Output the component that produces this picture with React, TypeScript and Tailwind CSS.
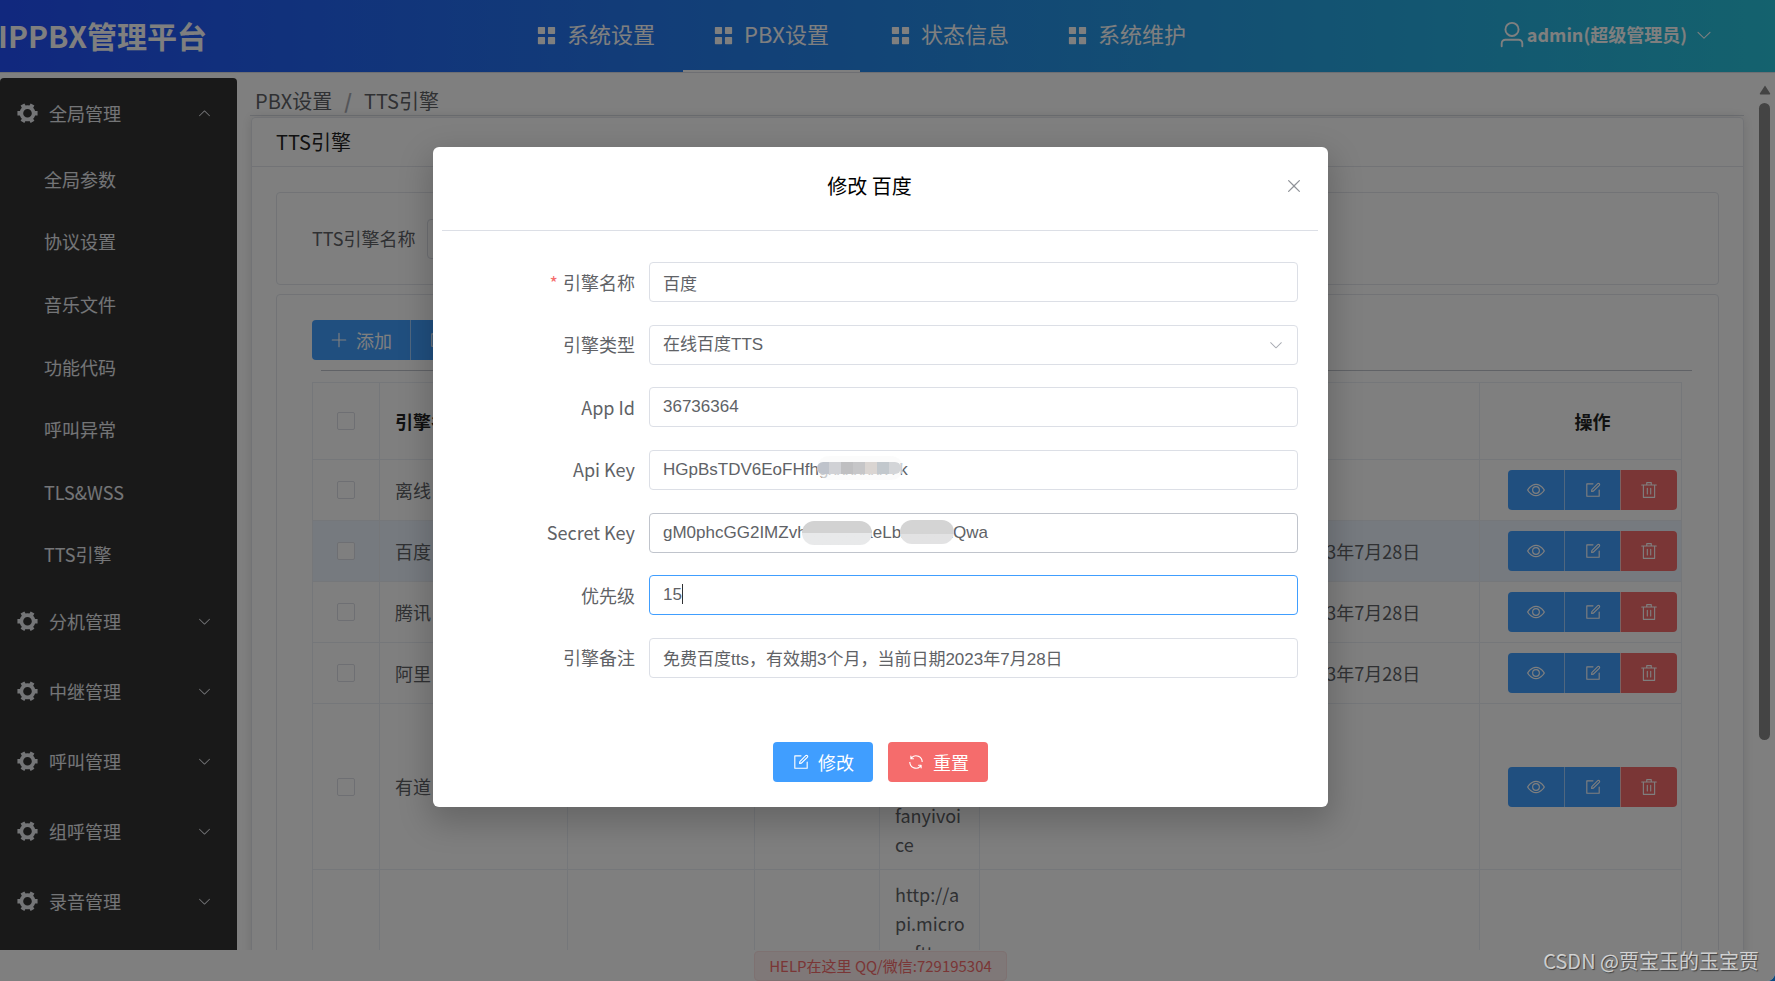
import React from 'react';
import { clsx } from 'clsx';

const ICONS = {
  menu: 'M160 448a32 32 0 0 1-32-32V160.064a32 32 0 0 1 32-32h256a32 32 0 0 1 32 32V416a32 32 0 0 1-32 32H160zm448 0a32 32 0 0 1-32-32V160.064a32 32 0 0 1 32-32h255.936a32 32 0 0 1 32 32V416a32 32 0 0 1-32 32H608zM160 896a32 32 0 0 1-32-32V608a32 32 0 0 1 32-32h256a32 32 0 0 1 32 32v256a32 32 0 0 1-32 32H160zm448 0a32 32 0 0 1-32-32V608a32 32 0 0 1 32-32h255.936a32 32 0 0 1 32 32v256a32 32 0 0 1-32 32H608z',
  gear: 'M764.416 254.72a351.68 351.68 0 0 1 86.336 149.184H960v192.064H850.752a351.68 351.68 0 0 1-86.336 149.312l54.72 94.72-166.272 96-54.592-94.72a352.64 352.64 0 0 1-172.48 0L371.136 936l-166.272-96 54.72-94.72a351.68 351.68 0 0 1-86.336-149.312H64v-192h109.248a351.68 351.68 0 0 1 86.336-149.312L204.8 160l166.208-96h.192l54.656 94.592a352.64 352.64 0 0 1 172.48 0L652.8 64h.128L819.2 160l-54.72 94.72zM704 499.968a192 192 0 1 0-384 0 192 192 0 0 0 384 0z',
  arrow: 'M831.872 340.864 512 652.672 192.128 340.864a30.592 30.592 0 0 0-42.752 0 29.12 29.12 0 0 0 0 41.6L489.664 714.24a32 32 0 0 0 44.672 0l340.288-331.712a29.12 29.12 0 0 0 0-41.728 30.592 30.592 0 0 0-42.752 0z',
  user: 'M512 512a192 192 0 1 0 0-384 192 192 0 0 0 0 384zm0 64a256 256 0 1 1 0-512 256 256 0 0 1 0 512zm320 320v-96a96 96 0 0 0-96-96H288a96 96 0 0 0-96 96v96a32 32 0 1 1-64 0v-96a160 160 0 0 1 160-160h448a160 160 0 0 1 160 160v96a32 32 0 1 1-64 0z',
  plus: 'M480 480V128a32 32 0 0 1 64 0v352h352a32 32 0 1 1 0 64H544v352a32 32 0 1 1-64 0V544H128a32 32 0 0 1 0-64h352z',
  close: 'M764.288 214.592 512 466.88 259.712 214.592a31.936 31.936 0 0 0-45.12 45.12L466.752 512 214.528 764.224a31.936 31.936 0 1 0 45.12 45.184L512 557.184l252.288 252.288a31.936 31.936 0 0 0 45.12-45.12L557.12 512.064l252.288-252.352a31.936 31.936 0 1 0-45.12-45.184z',
  view: 'M512 160c320 0 512 352 512 352S832 864 512 864 0 512 0 512s192-352 512-352zm0 64c-225.28 0-384.128 208.064-436.8 288 52.608 79.872 211.456 288 436.8 288 225.28 0 384.128-208.064 436.8-288-52.608-79.872-211.456-288-436.8-288zm0 64a224 224 0 1 1 0 448 224 224 0 0 1 0-448zm0 64a160.192 160.192 0 0 0-160 160c0 88.192 71.744 160 160 160s160-71.808 160-160-71.744-160-160-160z',
  edit: 'M832 512a32 32 0 1 1 64 0v352a32 32 0 0 1-32 32H160a32 32 0 0 1-32-32V160a32 32 0 0 1 32-32h352a32 32 0 0 1 0 64H192v640h640V512zM469.952 554.24l52.8-7.552L847.104 222.4a32 32 0 1 0-45.248-45.248L477.44 501.44l-7.552 52.8zm422.4-422.4a96 96 0 0 1 0 135.808l-331.84 331.84a32 32 0 0 1-18.112 9.088L436.8 623.68a32 32 0 0 1-36.224-36.224l15.104-105.6a32 32 0 0 1 9.024-18.112l331.904-331.84a96 96 0 0 1 135.744 0z',
  trash: 'M160 256H96a32 32 0 0 1 0-64h256V95.936a32 32 0 0 1 32-32h256a32 32 0 0 1 32 32V192h256a32 32 0 1 1 0 64h-64v672a32 32 0 0 1-32 32H192a32 32 0 0 1-32-32V256zm448-64v-64H416v64h192zM224 896h576V256H224v640zm192-128a32 32 0 0 1-32-32V416a32 32 0 0 1 64 0v320a32 32 0 0 1-32 32zm192 0a32 32 0 0 1-32-32V416a32 32 0 0 1 64 0v320a32 32 0 0 1-32 32z',
  refresh: 'M771.776 794.88A384 384 0 0 1 128 512h64a320 320 0 0 0 555.712 216.448H654.72a32 32 0 1 1 0-64h149.056a32 32 0 0 1 32 32v148.928a32 32 0 1 1-64 0v-50.56zM276.288 295.616h92.992a32 32 0 0 1 0 64H220.16a32 32 0 0 1-32-32V178.56a32 32 0 0 1 64 0v50.56A384 384 0 0 1 896.128 512h-64a320 320 0 0 0-555.776-216.384z',
};

function Icon({ name, className }: { name: keyof typeof ICONS; className?: string }) {
  return (
    <svg viewBox="0 0 1024 1024" fill="currentColor" aria-hidden="true" className={clsx('shrink-0', className)}>
      <path d={ICONS[name]} />
    </svg>
  );
}

const navItems = ['系统设置', 'PBX设置', '状态信息', '系统维护'];
const subMenus = ['全局参数', '协议设置', '音乐文件', '功能代码', '呼叫异常', 'TLS&WSS', 'TTS引擎'];
const menus = ['分机管理', '中继管理', '呼叫管理', '组呼管理', '录音管理'];

const engines = [
  { name: '离线', type: '离线TTS', level: '10', url: '', remark: '' },
  { name: '百度', type: '在线百度TTS', level: '15', url: '', remark: '免费百度tts，有效期3个月，当前日期2023年7月28日' },
  { name: '腾讯', type: '在线腾讯TTS', level: '20', url: '', remark: '免费腾讯tts，有效期3个月，当前日期2023年7月28日' },
  { name: '阿里', type: '在线阿里TTS', level: '25', url: '', remark: '免费阿里tts，有效期3个月，当前日期2023年7月28日' },
  { name: '有道', type: '在线有道TTS', level: '30', url: 'http://tt\ns.youda\no.com/\nfanyivoi\nce', remark: '' },
  { name: '微软', type: '在线微软TTS', level: '35', url: 'http://a\npi.micro\nsofttran\nslator.c\nom/V2/\nHttp.sv\nc/Speak', remark: '' },
];

function Header() {
  return (
    <header className="flex h-[73px] shrink-0 items-stretch justify-between border-b border-[#dcdfe6] bg-[linear-gradient(to_right,#2250fc,#28c4dc)] text-white">
      <div className="flex w-[506px] items-center pb-[3px]">
        <h1 className="flex w-[207px] justify-end overflow-hidden text-3xl font-bold whitespace-nowrap">IPPBX管理平台</h1>
      </div>
      <nav className="flex flex-1">
        {navItems.map((item) => (
          <a
            key={item}
            href="#"
            className={clsx(
              'flex min-w-[177px] items-center gap-1.5 border-b-2 px-[25px] text-[22px] whitespace-nowrap',
              item === 'PBX设置' ? 'border-white' : 'border-transparent'
            )}
          >
            <span className="flex w-[30px] justify-center">
              <Icon name="menu" className="size-[23px]" />
            </span>
            <span className="pb-[3px]">{item}</span>
          </a>
        ))}
      </nav>
      <button type="button" className="mr-[62px] flex items-center pb-[3px] text-[18px] font-bold">
        <Icon name="user" className="size-[30px]" />
        admin(超级管理员)
        <Icon name="arrow" className="ml-2 size-[18px]" />
      </button>
    </header>
  );
}

function MenuTitle({ label, open }: { label: string; open?: boolean }) {
  return (
    <button type="button" className="flex h-[70px] w-full items-center pr-[25px] pl-4">
      <Icon name="gear" className="mr-[10px] size-[23px]" />
      {label}
      <Icon name="arrow" className={clsx('ml-auto size-[15px]', open && 'rotate-180')} />
    </button>
  );
}

function Sidebar() {
  return (
    <aside className="mt-[5px] w-[237px] shrink-0 overflow-hidden rounded-t bg-[#333] text-[#e8eaef]">
      <MenuTitle label="全局管理" open />
      <ul className="flex min-h-[438px] flex-col">
        {subMenus.map((item) => (
          <li key={item} className="flex flex-1 items-center pl-11">
            <a href="#">{item}</a>
          </li>
        ))}
      </ul>
      {menus.map((item) => (
        <MenuTitle key={item} label={item} />
      ))}
    </aside>
  );
}

function RowActions() {
  return (
    <div className="flex justify-center text-white">
      <button type="button" aria-label="查看" className="flex h-10 w-[57px] items-center justify-center rounded-l border-r border-[#a0cfff] bg-[#409eff]">
        <Icon name="view" className="size-[18px]" />
      </button>
      <button type="button" aria-label="修改" className="flex h-10 w-14 items-center justify-center border-r border-[#f9c5c5] bg-[#409eff]">
        <Icon name="edit" className="size-[18px]" />
      </button>
      <button type="button" aria-label="删除" className="flex h-10 w-14 items-center justify-center rounded-r bg-[#f56c6c]">
        <Icon name="trash" className="size-[18px]" />
      </button>
    </div>
  );
}

function CheckBox({ label }: { label: string }) {
  return (
    <input
      type="checkbox"
      aria-label={label}
      className="mx-auto block size-[18px] appearance-none rounded-xs border border-[#dcdfe6] bg-white"
    />
  );
}

function EngineTable() {
  const cell = 'border border-[#ebeef5] px-[15px] py-[10px]';
  return (
    <div className="mt-[11px] pr-px">
      <table className="w-full table-fixed border-collapse text-left">
        <colgroup>
          <col className="w-[67px]" />
          <col className="w-[188px]" />
          <col className="w-[187px]" />
          <col className="w-[125px]" />
          <col className="w-[100px]" />
          <col />
          <col className="w-[202px]" />
        </colgroup>
        <thead>
          <tr className="h-[77px] text-[#222]">
            <th className={cell}>
              <CheckBox label="全选" />
            </th>
            {['引擎名称', '引擎类型', '优先级', 'URL', '引擎备注'].map((title) => (
              <th key={title} className={cell}>{title}</th>
            ))}
            <th className="border border-[#ebeef5] pl-6 text-center">操作</th>
          </tr>
        </thead>
        <tbody>
          {engines.map((row) => (
            <tr key={row.name} className={row.name === '百度' ? 'bg-[#ecf5ff]' : undefined}>
              <td className={cell}>
                <CheckBox label={row.name} />
              </td>
              <td className={cell}>{row.name}</td>
              <td className={cell}>{row.type}</td>
              <td className={cell}>{row.level}</td>
              <td className="border border-[#ebeef5] py-[10px] pl-[15px] leading-[29px] whitespace-pre">{row.url}</td>
              <td className={cell}>{row.remark}</td>
              <td className="border border-[#ebeef5] py-[10px] pl-6">
                <RowActions />
              </td>
            </tr>
          ))}
        </tbody>
      </table>
    </div>
  );
}

function Content() {
  return (
    <main className="flex min-w-0 flex-1 flex-col overflow-hidden pr-[15px] pl-[13px]">
      <div className="flex h-[43px] shrink-0 items-center gap-3 border-b border-[#dcdfe6] pt-[13px] pl-[5px] text-xl">
        <a href="#">PBX设置</a>
        <span className="font-bold text-[#a8abb2]">/</span>
        <span>TTS引擎</span>
      </div>
      <section className="mt-px ml-px rounded border border-[#e4e7ed] shadow-[0_0_12px_rgba(0,0,0,0.12)]">
        <h2 className="flex h-[49px] items-center border-b border-[#e4e7ed] px-6 text-xl text-[#222]">TTS引擎</h2>
        <div className="flex flex-col gap-[9px] px-6 pt-[25px]">
          <div className="flex h-[93px] items-center gap-[14px] rounded border border-[#e4e7ed] px-[35px]">
            <label htmlFor="search-name" className="w-[101px] whitespace-nowrap">TTS引擎名称</label>
            <input id="search-name" className="h-10 w-[260px] rounded border border-[#dcdfe6] bg-white px-[13px]" />
          </div>
          <div className="rounded border border-[#e4e7ed] px-[35px] pt-[25px]">
            <div className="flex text-white">
              <button type="button" className="flex h-10 items-center gap-2 rounded-l border-r border-[#a0cfff] bg-[#409eff] px-[18px]">
                <Icon name="plus" className="size-[18px]" />
                添加
              </button>
              <button type="button" className="flex h-10 items-center gap-2 rounded-r bg-[#409eff] px-[18px]">
                <Icon name="edit" className="size-[18px]" />
                修改
              </button>
            </div>
            <hr className="mt-[10px] -mr-[9px] ml-[9px] border-[#c0c4cc]" />
            <EngineTable />
          </div>
        </div>
      </section>
    </main>
  );
}

function ScrollBar() {
  return (
    <div className="flex w-4 shrink-0 flex-col pt-3">
      <svg viewBox="0 0 12 10" className="h-[10px] w-3" fill="#888" aria-hidden="true">
        <path d="M6 0.5 11.2 8.6Q11.4 9.5 10.5 9.5H1.5Q0.6 9.5 0.8 8.6Z" />
      </svg>
      <div className="mt-2 h-[637px] w-[11px] rounded-full bg-[#888]" />
    </div>
  );
}

interface FieldProps {
  id: string;
  label: string;
  required?: boolean;
  children: React.ReactNode;
}

function Field({ id, label, required, children }: FieldProps) {
  return (
    <div className="flex h-10 items-center">
      <label htmlFor={id} className="w-[216px] shrink-0 pr-[14px] text-right">
        {required && <span className="mr-[5px] text-[#f56c6c]">*</span>}
        {label}
      </label>
      <div className="relative flex-1">{children}</div>
    </div>
  );
}

// Blurred-out part of the api key
function KeyMosaic() {
  return (
    <div className="absolute top-1.5 left-[168px] flex h-6 w-[86px] rounded-full bg-[#fafafa]/70 py-1.5">
      <span className="w-3 rounded-l-full bg-[#bfc3cb]" />
      <span className="w-3 bg-[#d0d1d5]" />
      <span className="w-3 bg-[#bfbfc1]" />
      <span className="w-3 bg-[#c6c6c8]" />
      <span className="w-3 bg-[#dad5d2]" />
      <span className="w-3 bg-[#c2c8cd]" />
      <span className="w-3 rounded-r-full bg-[#d3d5d8]" />
    </div>
  );
}

const inputBase =
  'block h-10 w-full rounded border bg-white px-[13px] font-["Liberation_Sans","Noto_Sans_CJK_SC",sans-serif] text-[17px] text-[#606266] outline-none';

function EditDialog() {
  return (
    <div role="dialog" aria-label="修改 百度" className="w-[895px] rounded-md bg-white shadow-[0_12px_32px_4px_rgba(0,0,0,0.2)]">
      <div className="flex h-[83px] items-center pr-6 pb-[5px]">
        <h3 className="flex-1 pl-[22px] text-center text-xl text-black">修改 百度</h3>
        <button type="button" aria-label="关闭" className="text-[#909399]">
          <Icon name="close" className="size-5" />
        </button>
      </div>
      <hr className="mr-[10px] ml-[9px] border-[#dcdfe6]" />
      <form>
        <div className="flex min-h-[416px] flex-col justify-between pr-[30px] mt-[31px]">
          <Field id="name" label="引擎名称" required>
            <input id="name" defaultValue="百度" className={clsx(inputBase, 'border-[#dcdfe6]')} />
          </Field>
          <Field id="type" label="引擎类型">
            <select id="type" className={clsx(inputBase, 'appearance-none border-[#dcdfe6]')}>
              <option>在线百度TTS</option>
            </select>
            <Icon name="arrow" className="pointer-events-none absolute top-3 right-[14px] size-4 text-[#a8abb2]" />
          </Field>
          <Field id="app-id" label="App Id">
            <input id="app-id" defaultValue="36736364" className={clsx(inputBase, 'border-[#dcdfe6]')} />
          </Field>
          <Field id="api-key" label="Api Key">
            <input id="api-key" defaultValue="HGpBsTDV6EoFHfhgxxxxxxxYk" className={clsx(inputBase, 'border-[#dcdfe6]')} />
            <KeyMosaic />
          </Field>
          <Field id="secret-key" label="Secret Key">
            <input id="secret-key" defaultValue="gM0phcGG2IMZvhaaaqaaaeLbxxqxxxQwa" className={clsx(inputBase, 'border-[#c0c4cc]')} />
            <div className="absolute top-2 left-[153px] h-6 w-[70px] rounded-full bg-linear-to-b from-[#d2d2d2] from-50% to-[#e8e9ea] to-50%" />
            <div className="absolute top-[7px] left-[251px] h-6 w-[54px] rounded-full bg-linear-to-b from-[#d4d4d4] from-60% to-[#e2e2e3] to-60%" />
          </Field>
          <Field id="level" label="优先级">
            <input id="level" defaultValue="15" className={clsx(inputBase, 'border-[#409eff]')} />
            <span className="absolute top-[9px] left-[33px] h-5 w-px bg-[#303133]" />
          </Field>
          <Field id="remark" label="引擎备注">
            <input id="remark" defaultValue="免费百度tts，有效期3个月，当前日期2023年7月28日" className={clsx(inputBase, 'border-[#dcdfe6]')} />
          </Field>
        </div>
        <div className="flex justify-center gap-[15px] pt-[64px] pb-[25px] text-white">
          <button type="button" className="flex h-10 items-center gap-2 rounded bg-[#409eff] px-[19px]">
            <Icon name="edit" className="size-[18px]" />
            修改
          </button>
          <button type="button" className="flex h-10 items-center gap-2 rounded bg-[#f56c6c] px-[19px]">
            <Icon name="refresh" className="size-[18px]" />
            重置
          </button>
        </div>
      </form>
    </div>
  );
}

export default function App() {
  return (
    <div className="bg-[#0b4a80]">
      <div className='relative flex h-screen flex-col overflow-hidden rounded-br-lg bg-white font-["Noto_Sans_CJK_SC",sans-serif] text-[18px] text-[#606266]'>
        <Header />
        <div className="flex min-h-0 flex-1">
          <Sidebar />
          <Content />
          <ScrollBar />
        </div>
        <footer className="flex h-[31px] shrink-0 items-end justify-center pr-[14px]">
          <span className="flex h-[30px] items-center rounded border border-[#fde2e2] bg-[#fef0f0] px-[14px] text-[15px] text-[#f56c6c]">
            HELP在这里 QQ/微信:729195304
          </span>
        </footer>
        <div className="absolute inset-0 flex items-start justify-center bg-black/50 pt-[147px] pr-[14px]">
          <EditDialog />
        </div>
        <div className="absolute right-4 bottom-1.5 text-xl text-white/70 [text-shadow:1px_1px_1px_rgba(0,0,0,0.5)]">CSDN @贾宝玉的玉宝贾</div>
      </div>
    </div>
  );
}
